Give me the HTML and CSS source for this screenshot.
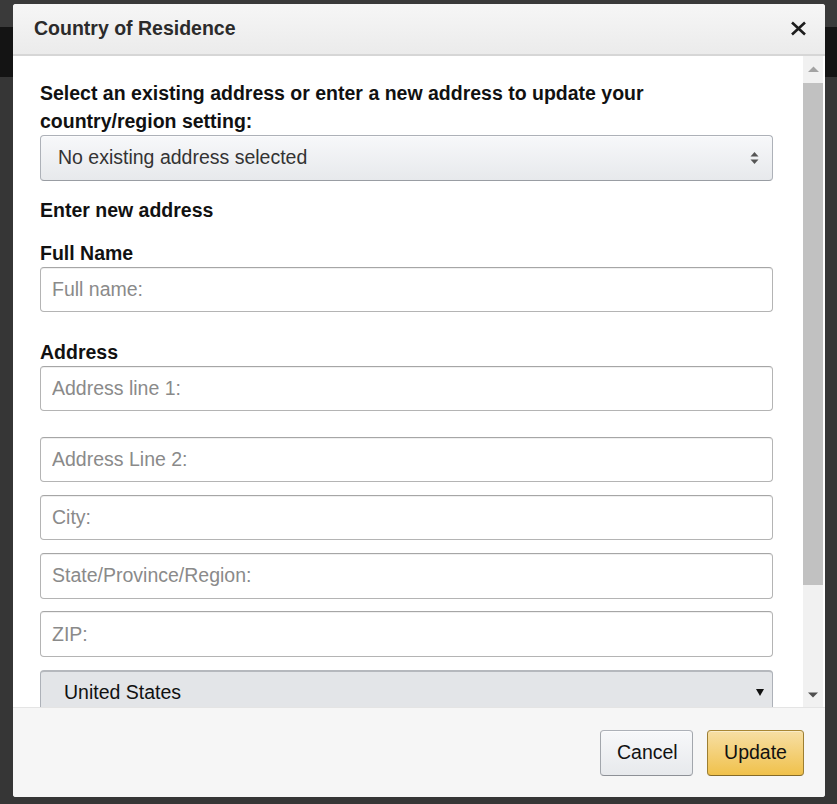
FILE: index.html
```html
<!doctype html>
<html lang="en">
  <head>
    <meta charset="UTF-8" />
    <meta name="viewport" content="width=device-width, initial-scale=1.0" />
    <title>Country of Residence</title>
    <link rel="stylesheet" href="styles.css">
  </head>
  <body>
    <div class="modal">
      <div class="modal-header">
        <h4>Country of Residence</h4>
        <button class="close-button" aria-label="Close">
          <svg width="17" height="15" viewBox="0 0 17 15">
            <path d="M2 1.5 L15 13.5 M15 1.5 L2 13.5" />
          </svg>
        </button>
      </div>

      <div class="modal-body">
        <div class="form-area">
          <p class="intro">
            Select an existing address or enter a new address to update your country/region setting:
          </p>

          <div class="dropdown dropdown-address">
            <span>No existing address selected</span>
            <svg class="updown" width="9" height="14" viewBox="0 0 9 14">
              <polygon points="0.5,5.5 4.5,1 8.5,5.5" />
              <polygon points="0.5,8.5 4.5,13 8.5,8.5" />
            </svg>
          </div>

          <h5 class="section-title">Enter new address</h5>

          <label class="field-label" for="full-name">Full Name</label>
          <input class="text-input gap-large" id="full-name" type="text" placeholder="Full name:" />

          <label class="field-label" for="line1">Address</label>
          <input class="text-input gap-large" id="line1" type="text" placeholder="Address line 1:" />
          <input class="text-input" type="text" placeholder="Address Line 2:" />
          <input class="text-input" type="text" placeholder="City:" />
          <input class="text-input" type="text" placeholder="State/Province/Region:" />
          <input class="text-input" type="text" placeholder="ZIP:" />

          <div class="dropdown dropdown-country">
            <span>United States</span>
            <svg width="8" height="7" viewBox="0 0 8 7">
              <polygon points="0,0 8,0 4,7" />
            </svg>
          </div>
        </div>

        <div class="scrollbar">
          <div class="scroll-btn">
            <svg width="11" height="6" viewBox="0 0 11 6"><polygon points="0,6 5.5,0.5 11,6" /></svg>
          </div>
          <div class="scroll-thumb"></div>
          <div class="scroll-track"></div>
          <div class="scroll-btn scroll-btn-down">
            <svg width="10" height="6" viewBox="0 0 10 6"><polygon points="0,0.5 5,5.5 10,0.5" /></svg>
          </div>
        </div>
      </div>

      <div class="modal-footer">
        <button class="btn btn-cancel">Cancel</button>
        <button class="btn btn-update">Update</button>
      </div>
    </div>
  </body>
</html>
```

FILE: styles.css
```css
* {
  margin: 0;
  padding: 0;
  box-sizing: border-box;
}

body {
  font-family: 'Liberation Sans', Arial, sans-serif;
  height: 804px;
  overflow: hidden;
  padding: 4px 0 0 13px;
  background: linear-gradient(to bottom, #3a3a3a 0, #3a3a3a 27px, #141414 27px, #141414 77px, #363636 77px);
  color: #111;
}

.modal {
  width: 812px;
  height: 793px;
  background: #fff;
  border-radius: 3px;
  overflow: hidden;
  display: flex;
  flex-direction: column;
}

.modal-header {
  height: 52px;
  flex-shrink: 0;
  display: flex;
  align-items: center;
  justify-content: space-between;
  padding: 0 18px 2px 21px;
  background: linear-gradient(to bottom, #f6f6f6, #ebebeb);
  border-bottom: 2px solid #d6d6d6;
}

.modal-header h4 {
  font-size: 19.5px;
  font-weight: bold;
  color: #2b2b2b;
}

.close-button {
  background: none;
  border: none;
  display: flex;
  cursor: pointer;
}

.close-button path {
  stroke: #1d1d1d;
  stroke-width: 2.6;
  fill: none;
}

.modal-body {
  flex: 1;
  display: flex;
  overflow: hidden;
}

.form-area {
  flex: 1;
  overflow: hidden;
  padding: 23px 30px 0 27px;
  display: flex;
  flex-direction: column;
}

.intro {
  font-size: 19.5px;
  font-weight: bold;
  line-height: 28px;
}

.dropdown {
  height: 45.5px;
  flex-shrink: 0;
  display: flex;
  align-items: center;
  justify-content: space-between;
  border: 1px solid #adb1b8;
  border-bottom-color: #999da3;
  border-radius: 4px;
  font-size: 19.5px;
}

.dropdown-address {
  padding: 0 13px 0 17px;
  margin-bottom: 15px;
  color: #333;
  background: linear-gradient(to bottom, #f7f8fa, #e7e9ec);
  box-shadow: 0 1px 0 rgba(255, 255, 255, 0.6) inset;
}

.updown polygon {
  fill: #555;
}

.dropdown-country {
  padding: 0 8px 0 23px;
  background: #e3e5e8;
  border-top: 2px solid #b5b8bd;
}

.dropdown-country polygon {
  fill: #111;
}

.section-title {
  font-size: 19.5px;
  font-weight: bold;
  line-height: 28px;
  margin-bottom: 15px;
}

.field-label {
  font-size: 19.5px;
  font-weight: bold;
  line-height: 28px;
}

.text-input {
  height: 45.5px;
  flex-shrink: 0;
  width: 100%;
  margin-bottom: 12.75px;
  padding: 0 11px;
  border: 1px solid #b4b4b4;
  border-top-color: #a6a6a6;
  border-radius: 4px;
  box-shadow: 0 1px 0 rgba(0, 0, 0, 0.06) inset;
  font-family: inherit;
  font-size: 19.5px;
  color: #111;
  outline: none;
}

.text-input::placeholder {
  color: #8a8a8a;
}

.text-input.gap-large {
  margin-bottom: 25.5px;
}

.scrollbar {
  width: 20px;
  margin-right: 2px;
  background: #f1f1f1;
  display: flex;
  flex-direction: column;
}

.scroll-btn {
  height: 25px;
  display: flex;
  align-items: center;
  justify-content: center;
}

.scroll-btn polygon {
  fill: #a3a3a3;
}

.scroll-btn-down polygon {
  fill: #505050;
}

.scroll-thumb {
  height: 502px;
  margin-top: 2px;
  background: #c1c1c1;
}

.scroll-track {
  flex: 1;
}

.modal-footer {
  height: 90px;
  flex-shrink: 0;
  display: flex;
  align-items: center;
  justify-content: flex-end;
  gap: 14px;
  padding: 0 21px 0 0;
  background: #f6f6f6;
  border-top: 1px solid #e4e4e4;
}

.btn {
  height: 46px;
  padding: 0 16px;
  border: 1px solid;
  border-radius: 4px;
  font-family: inherit;
  font-size: 19.5px;
  color: #111;
  cursor: pointer;
}

.btn-cancel {
  width: 93px;
  background: linear-gradient(to bottom, #f7f8fa, #e7e9ec);
  border-color: #adb1b8 #a2a6ac #8d9096;
  box-shadow: 0 1px 0 rgba(255, 255, 255, 0.6) inset;
}

.btn-update {
  width: 97px;
  background: linear-gradient(to bottom, #f7dfa5, #f0c14b);
  border-color: #a88734 #9c7e31 #846a29;
  box-shadow: 0 1px 0 rgba(255, 255, 255, 0.4) inset;
}
```
